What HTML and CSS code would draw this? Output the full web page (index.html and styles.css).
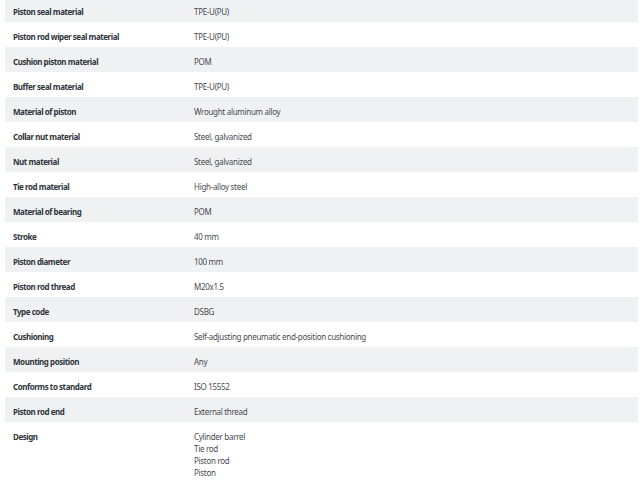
FILE: index.html
```html
<!DOCTYPE html>
<html>
<head>
<meta charset="utf-8">
<link rel="stylesheet" href="styles.css">
</head>
<body>
<div class="specs">
  <div class="row"><div class="label">Piston seal material</div><div class="value">TPE-U(PU)</div></div>
  <div class="row"><div class="label">Piston rod wiper seal material</div><div class="value">TPE-U(PU)</div></div>
  <div class="row"><div class="label">Cushion piston material</div><div class="value">POM</div></div>
  <div class="row"><div class="label">Buffer seal material</div><div class="value">TPE-U(PU)</div></div>
  <div class="row"><div class="label">Material of piston</div><div class="value">Wrought aluminum alloy</div></div>
  <div class="row"><div class="label">Collar nut material</div><div class="value">Steel, galvanized</div></div>
  <div class="row"><div class="label">Nut material</div><div class="value">Steel, galvanized</div></div>
  <div class="row"><div class="label">Tie rod material</div><div class="value">High-alloy steel</div></div>
  <div class="row"><div class="label">Material of bearing</div><div class="value">POM</div></div>
  <div class="row"><div class="label">Stroke</div><div class="value">40 mm</div></div>
  <div class="row"><div class="label">Piston diameter</div><div class="value">100 mm</div></div>
  <div class="row"><div class="label">Piston rod thread</div><div class="value">M20x1.5</div></div>
  <div class="row"><div class="label">Type code</div><div class="value">DSBG</div></div>
  <div class="row"><div class="label">Cushioning</div><div class="value">Self-adjusting pneumatic end-position cushioning</div></div>
  <div class="row"><div class="label">Mounting position</div><div class="value">Any</div></div>
  <div class="row"><div class="label">Conforms to standard</div><div class="value">ISO 15552</div></div>
  <div class="row"><div class="label">Piston rod end</div><div class="value">External thread</div></div>
  <div class="row"><div class="label">Design</div><div class="value">Cylinder barrel<br>Tie rod<br>Piston rod<br>Piston</div></div>
</div>
</body>
</html>
```
FILE: styles.css
```css
html, body {
  margin: 0;
  padding: 0;
  background: #ffffff;
}
body {
  font-family: "Noto Sans", "Open Sans", sans-serif;
  font-size: 8px;
  line-height: 12px;
}
.specs {
  width: 633px;
  margin-left: 5px;
  margin-top: -3px;
  display: flex;
  flex-direction: column;
}
.row {
  display: grid;
  grid-template-columns: 189px 1fr;
  min-height: 25px;
  box-sizing: border-box;
  padding: 9px 0 4px;
}
.row:nth-child(odd) {
  background: #f0f1f3;
}
.label {
  padding-left: 8px;
  font-weight: 700;
  letter-spacing: -0.45px;
  color: #2f353c;
}
.value {
  letter-spacing: -0.3px;
  color: #464b51;
}
```
